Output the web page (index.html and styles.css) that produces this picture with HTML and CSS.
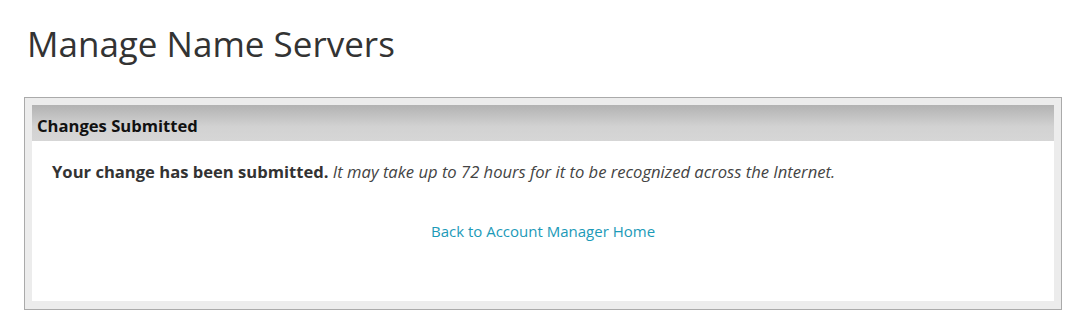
FILE: index.html
```
<!DOCTYPE html>
<html>
<head>
<meta charset="utf-8">
<link rel="stylesheet" href="styles.css">
</head>
<body>
<div class="page">
  <h1 class="title">Manage Name Servers</h1>
  <div class="box">
    <div class="panel">
      <div class="panel-head">Changes Submitted</div>
      <div class="panel-body">
        <p class="msg"><strong>Your change has been submitted.</strong> <em>It may take up to 72 hours for it to be recognized across the Internet.</em></p>
        <p class="back"><a href="#">Back to Account Manager Home</a></p>
      </div>
    </div>
  </div>
</div>
</body>
</html>
```
FILE: styles.css
```
html, body {
  margin: 0;
  padding: 0;
  background: #fff;
}
body {
  font-family: "Open Sans", "Liberation Sans", sans-serif;
  color: #333;
}
.page {
  padding: 0 15px 0 24px;
}
.title {
  margin: 0;
  padding: 22px 0 0 3px;
  font-size: 35px;
  font-weight: 400;
  line-height: 44px;
  color: #333;
}
.box {
  margin-top: 31px;
  border: 1px solid #aaa;
  background: #ececec;
  padding: 7px 7px 8px 7px;
}
.panel {
  background: #fff;
}
.panel-head {
  height: 36px;
  box-sizing: border-box;
  padding: 0 5px;
  line-height: 42px;
  font-size: 16.6px;
  font-weight: 700;
  color: #111;
  background: linear-gradient(to bottom, #b2b2b2 0%, #d2d2d2 60%, #d6d6d6 100%);
}
.panel-body {
  padding: 19px 20px 58px 20px;
}
.msg {
  margin: 0;
  font-size: 16.6px;
  line-height: 24px;
  color: #333;
}
.msg strong {
  font-weight: 700;
}
.msg em {
  font-style: italic;
  color: #444;
}
.back {
  margin: 35px 0 0;
  text-align: center;
  font-size: 15px;
  line-height: 24px;
}
.back a {
  color: #1c9ab8;
  text-decoration: none;
}
```
